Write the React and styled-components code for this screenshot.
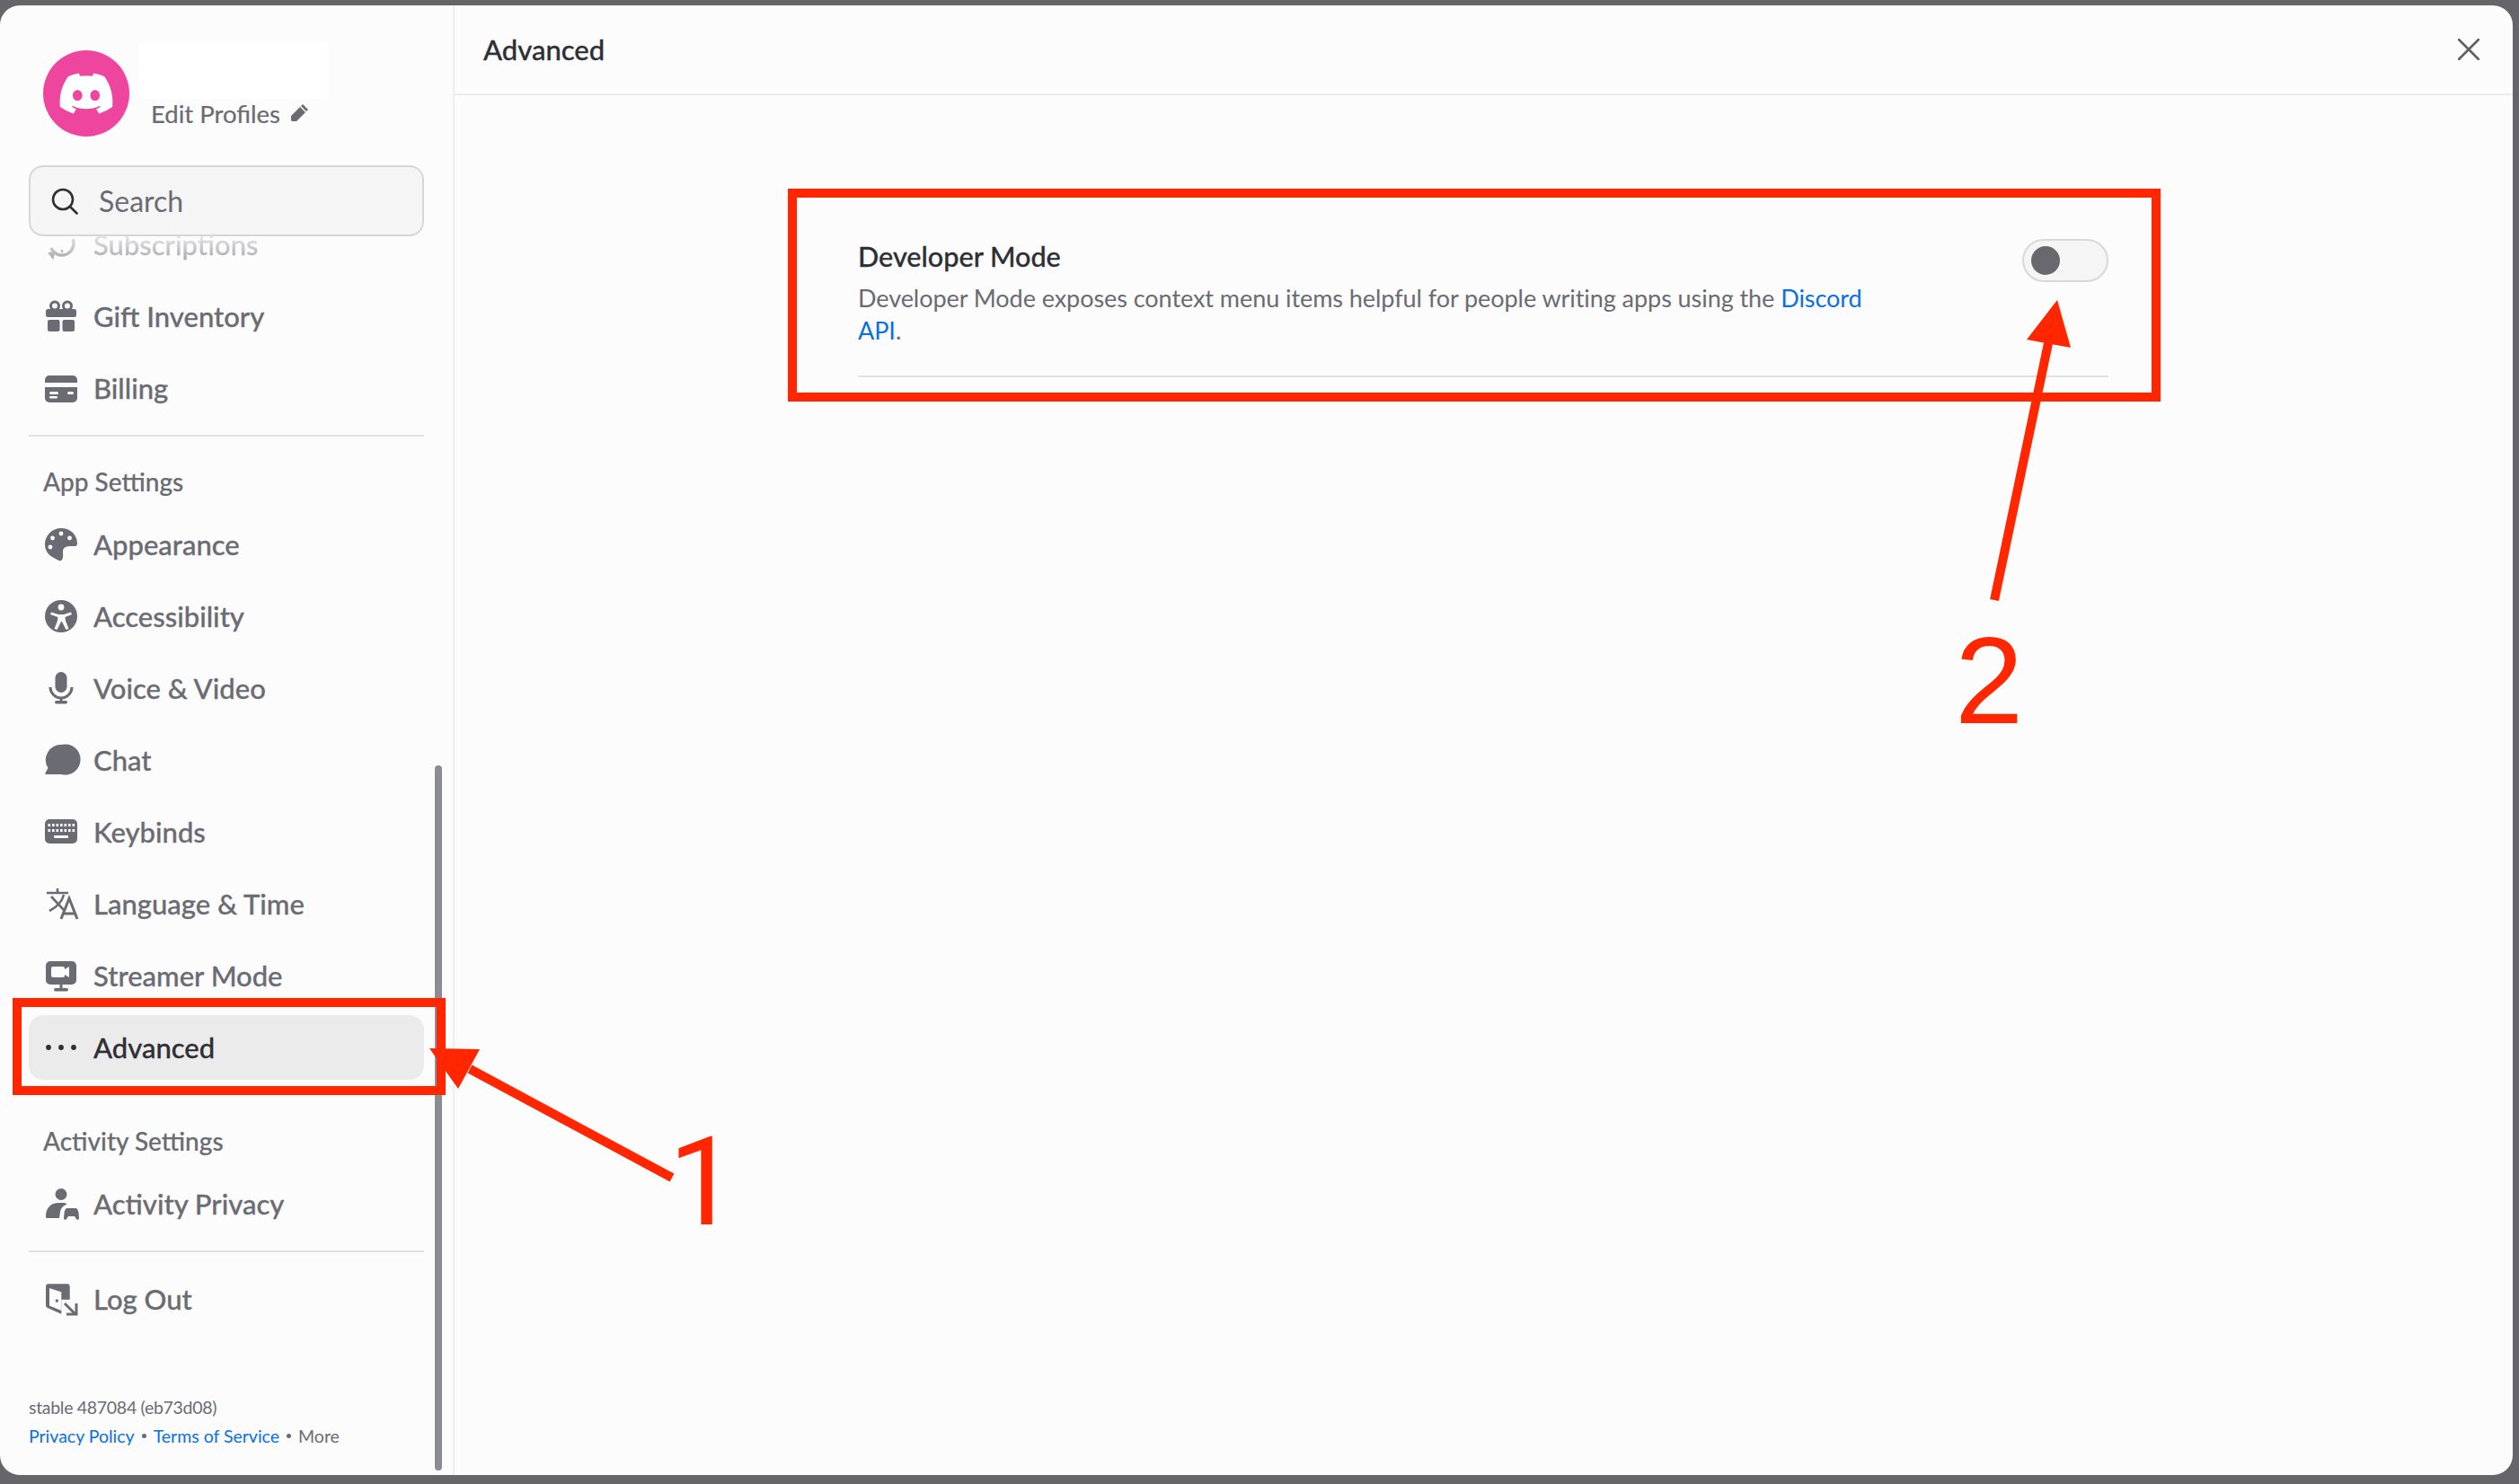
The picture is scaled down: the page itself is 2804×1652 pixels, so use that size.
import React from 'react';
import styled, { createGlobalStyle } from 'styled-components';
import { FaDiscord } from 'react-icons/fa';

const GlobalStyle = createGlobalStyle`
  html, body {
    margin: 0;
    background: #66666a;
  }
  * {
    box-sizing: border-box;
  }
`;

const FONT = `Lato, 'Noto Sans', 'Liberation Sans', sans-serif`;
const GREY = '#6a6b73';
const DARK = '#2e2f35';
const BG = '#fcfcfc';
const LINK = '#0b6fe3';
const RED = '#ff2600';

const Page = styled.div`
  position: relative;
  width: 2804px;
  height: 1652px;
  padding: 6px 7px 10px 0;
  font-family: ${FONT};
  overflow: hidden;
`;

const Win = styled.div`
  display: flex;
  height: 100%;
  background: ${BG};
  border-radius: 22px;
  overflow: hidden;
`;

const Sidebar = styled.aside`
  position: relative;
  display: flex;
  flex-direction: column;
  width: 506px;
  flex: none;
  border-right: 2px solid #eeeeef;
`;

const ScrollThumb = styled.div`
  position: absolute;
  left: 484px;
  top: 846px;
  bottom: 5px;
  width: 8px;
  border-radius: 4px;
  background: #8c8c94;
`;

const Profile = styled.div`
  display: flex;
  gap: 11px;
  height: 178px;
  padding: 42px 0 0 48px;
  flex: none;
`;

const Avatar = styled.div`
  display: flex;
  align-items: center;
  justify-content: center;
  width: 96px;
  height: 96px;
  margin-top: 8px;
  border-radius: 50%;
  background: #ee469f;
  color: #fff;
  font-size: 64px;
`;

const ProfileText = styled.div`
  display: flex;
  flex-direction: column;
`;

const NameMask = styled.div`
  width: 210px;
  height: 62px;
  background: #fff;
`;

const EditRow = styled.div`
  display: flex;
  align-items: center;
  gap: 11px;
  height: 32px;
  padding-left: 13px;
  color: ${GREY};
  font-size: 27.5px;
  -webkit-text-stroke: 0.2px ${GREY};
`;

const Search = styled.div`
  display: flex;
  align-items: center;
  flex: none;
  gap: 23px;
  width: 440px;
  height: 79px;
  margin-left: 32px;
  padding-left: 23px;
  border: 2px solid #d6d6d8;
  border-radius: 16px;
  background: #f5f5f5;
  color: ${GREY};
  font-size: 32px;
`;

const Nav = styled.nav`
  display: flex;
  flex-direction: column;
  flex: 1;
  padding: 0 32px 28px;
  overflow: hidden;
`;

const Group = styled.div`
  display: flex;
  flex-direction: column;
  flex: none;
  gap: 8px;
`;

const Row = styled.div`
  display: flex;
  align-items: center;
  flex: none;
  gap: 18px;
  height: 72px;
  padding-left: 18px;
  border-radius: 16px;
  background: ${(p) => (p.$active ? '#ebebeb' : 'transparent')};
  color: ${(p) => (p.$active ? DARK : GREY)};
  font-size: 31px;
  font-weight: 500;
  -webkit-text-stroke: 0.3px currentColor;
`;

const FadedRow = styled(Row)`
  margin-top: -27px;
  -webkit-mask-image: linear-gradient(to bottom, rgba(0,0,0,0.15) 27px, rgba(0,0,0,0.55) 72%);
  mask-image: linear-gradient(to bottom, rgba(0,0,0,0.15) 27px, rgba(0,0,0,0.55) 72%);
`;

const Icon = styled.svg`
  width: 36px;
  height: 36px;
  flex: none;
  overflow: visible;
  fill: currentColor;
`;

const Rule = styled.div`
  height: 2px;
  flex: none;
  margin: 16px 0;
  background: #e0e0e2;
`;

const Label = styled.div`
  display: flex;
  align-items: center;
  flex: none;
  height: 36px;
  margin: ${(p) => p.$top}px 0 16px 16px;
  color: ${GREY};
  font-size: 28px;
  font-weight: 500;
  -webkit-text-stroke: 0.2px ${GREY};
`;

const Footer = styled.div`
  display: flex;
  flex-direction: column;
  margin-top: auto;
  flex: none;
  color: ${GREY};
  font-size: 19.5px;
`;

const FootLine = styled.div`
  display: flex;
  align-items: center;
  height: 32px;
`;

const BuildLine = styled(FootLine)`
  letter-spacing: -0.3px;
`;

const FootLink = styled.span`
  color: ${LINK};
`;

const Dot = styled.span`
  width: 5px;
  height: 5px;
  margin: 0 8px;
  border-radius: 50%;
  background: ${GREY};
`;

const Main = styled.main`
  display: flex;
  flex-direction: column;
  flex: 1;
  min-width: 0;
`;

const TopBar = styled.header`
  display: flex;
  align-items: center;
  justify-content: space-between;
  height: 100px;
  padding: 0 37px 0 32px;
  border-bottom: 2px solid #ececed;
  color: ${DARK};
  font-size: 31px;
  font-weight: 500;
  -webkit-text-stroke: 0.3px ${DARK};
`;

const Close = styled.svg`
  width: 24px;
  height: 24px;
  stroke: #5f6066;
  stroke-width: 2.6;
  stroke-linecap: round;
`;

const Content = styled.div`
  padding: 160px 450px 0 449px;
`;

const Setting = styled.div`
  display: flex;
  align-items: flex-start;
  justify-content: space-between;
  height: 154px;
  border-bottom: 2px solid #e0e0e2;
`;

const SettingText = styled.div`
  display: flex;
  flex-direction: column;
  width: 1130px;
`;

const SettingTitle = styled.div`
  height: 40px;
  margin-bottom: 8px;
  color: ${DARK};
  font-size: 30.6px;
  font-weight: 500;
  line-height: 40px;
  -webkit-text-stroke: 0.3px ${DARK};
`;

const SettingDesc = styled.div`
  color: ${GREY};
  font-size: 27px;
  line-height: 36px;
  letter-spacing: -0.06px;
`;

const DescLink = styled.span`
  color: ${LINK};
`;

const Toggle = styled.div`
  display: flex;
  align-items: center;
  width: 96px;
  height: 48px;
  padding-left: 8px;
  border: 2px solid #d8d8da;
  border-radius: 24px;
  background: #f5f5f5;
`;

const Knob = styled.div`
  width: 32px;
  height: 32px;
  border-radius: 50%;
  background: #68686d;
`;

/* red annotations drawn on top of the screenshot */
const Overlay = styled.svg`
  position: absolute;
  left: 0;
  top: 0;
  width: 2804px;
  height: 1652px;
  pointer-events: none;
`;

const RedBox = styled.div`
  position: absolute;
  left: ${(p) => p.$x}px;
  top: ${(p) => p.$y}px;
  width: ${(p) => p.$w}px;
  height: ${(p) => p.$h}px;
  border: 10px solid ${RED};
  pointer-events: none;
`;

const Digit = styled.div`
  position: absolute;
  left: ${(p) => p.$x}px;
  top: ${(p) => p.$y}px;
  color: ${RED};
  font-family: ${(p) => p.$font}, sans-serif;
  font-size: 137px;
  line-height: 137px;
`;

const KEY_COLS = [3.5, 8, 12.500, 17, 21.500, 26, 30.500];

const icons = {
  subs: (
    <Icon viewBox="0 0 36 36">
      <path d="M7 22a13 13 0 1 0 24-10" fill="none" stroke="currentColor" strokeWidth="3.5" />
      <path d="M3 27l9-1-3 9z" />
      <path d="M19 3v3M19 24v3" stroke="currentColor" strokeWidth="2.5" />
    </Icon>
  ),
  gift: (
    <Icon viewBox="0 0 36 36">
      <circle cx="11" cy="6.5" r="4.5" fill="none" stroke="currentColor" strokeWidth="3" />
      <circle cx="25" cy="6.5" r="4.5" fill="none" stroke="currentColor" strokeWidth="3" />
      <rect x="1" y="10" width="34" height="9" rx="2.5" />
      <rect x="3" y="22" width="13.5" height="13" rx="2" />
      <rect x="19.5" y="22" width="13.5" height="13" rx="2" />
    </Icon>
  ),
  billing: (
    <Icon viewBox="0 0 36 36">
      <path d="M5 4h26a5 5 0 0 1 5 5v3H0V9a5 5 0 0 1 5-5z" />
      <path d="M0 17h36v12a5 5 0 0 1-5 5H5a5 5 0 0 1-5-5z" />
      <rect x="5" y="22" width="10" height="3" rx="1.5" fill={BG} />
      <rect x="5" y="27" width="9" height="2.5" rx="1.2" fill={BG} />
      <rect x="25" y="22" width="7" height="3" rx="1.5" fill={BG} />
    </Icon>
  ),
  palette: (
    <Icon viewBox="0 0 36 36">
      <path d="M18 0C28 0 36 7 36 17C36 21 33 20 29 20C24 20 20 21 20 26C20 30 21 34 18 36C16 37 14 35 10 33C4 30 0 25 0 18C0 8 8 0 18 0Z" />
      <circle cx="18" cy="6" r="2.4" fill={BG} />
      <circle cx="8.5" cy="11" r="2.4" fill={BG} />
      <circle cx="27.5" cy="11" r="2.4" fill={BG} />
      <circle cx="6" cy="21" r="2.4" fill={BG} />
    </Icon>
  ),
  access: (
    <Icon viewBox="0 0 36 36">
      <circle cx="18" cy="18" r="18" />
      <circle cx="18" cy="8" r="3.4" fill={BG} />
      <path d="M7 13.5l8 2.5h6l8-2.5 1 2.5-7.5 3 .5 4 3.5 9-3 1-4.5-9h-1l-4.5 9-3-1 3.5-9 .5-4L6 16z" fill={BG} />
    </Icon>
  ),
  mic: (
    <Icon viewBox="0 0 36 36">
      <rect x="11.5" y="0" width="13" height="23" rx="6.5" />
      <path d="M6 17a12 12 0 0 0 24 0" fill="none" stroke="currentColor" strokeWidth="3" />
      <rect x="16.5" y="28" width="3" height="6" />
      <rect x="11" y="32" width="14" height="3.5" rx="1.7" />
    </Icon>
  ),
  chat: (
    <Icon viewBox="0 0 36 36">
      <path d="M18.500 1a17 17 0 1 1 0 33H1.500c-1 0-1.500-1-1-1.800L3.500 27A17 17 0 0 1 18.500 1z" />
    </Icon>
  ),
  keys: (
    <Icon viewBox="0 0 36 36">
      <rect x="0" y="4" width="36" height="27" rx="5" />
      {KEY_COLS.map((x) => (
        <rect key={x} x={x} y="9" width="2.6" height="3" fill={BG} />
      ))}
      {KEY_COLS.map((x) => (
        <rect key={x} x={x} y="15" width="2.6" height="3" fill={BG} />
      ))}
      <rect x="10" y="22" width="16" height="3" rx="1" fill={BG} />
    </Icon>
  ),
  lang: (
    <Icon viewBox="0 0 36 36">
      <path d="M2 6h24M14 1v5M7 10l14 15M21 8C19 16 13 22 5 26" fill="none" stroke="currentColor" strokeWidth="2.6" />
      <path d="M18 35l9-23 9 23M21 29h12" fill="none" stroke="currentColor" strokeWidth="3" />
    </Icon>
  ),
  stream: (
    <Icon viewBox="0 0 36 36">
      <rect x="1" y="2" width="34" height="26" rx="5" />
      <path d="M9 8h11a2 2 0 0 1 2 2v1l5-3v12l-5-3v1a2 2 0 0 1-2 2H9a2 2 0 0 1-2-2V10a2 2 0 0 1 2-2z" fill={BG} />
      <rect x="16.500" y="28" width="3" height="4" />
      <rect x="10" y="32" width="16" height="3.5" rx="1.7" />
    </Icon>
  ),
  dots: (
    <Icon viewBox="0 0 36 36">
      <circle cx="4" cy="18" r="2.9" />
      <circle cx="18" cy="18" r="2.9" />
      <circle cx="32" cy="18" r="2.9" />
    </Icon>
  ),
  activity: (
    <Icon viewBox="0 0 36 36">
      <circle cx="18" cy="7.500" r="6.500" />
      <path d="M1 32c0-9 5-15 15-15h6c1 0 2 1 2 2-4 1-6 4-7 8l-1 7H2.500A1.500 1.500 0 0 1 1 32z" />
      <path d="M25 23h9c2 0 3 2 3.500 5l.5 6c0 2-2 2.500-3 1l-2-3h-7l-2 3c-1 1.500-3 1-3-1l.5-6c.5-3 1.500-5 3.500-5z" />
    </Icon>
  ),
  logout: (
    <Icon viewBox="0 0 36 36">
      <path d="M4 1.300H24.700a3 3 0 0 1 3 3V18.700H18.300V34.700L3 28a3 3 0 0 1-2-3V4.300a3 3 0 0 1 3-3z" />
      <path d="M5 6L18.300 10.300V31L5 25.500Z" fill={BG} />
      <circle cx="13.300" cy="20" r="1.700" />
      <path d="M22 23l12 12M35 23v12H24" fill="none" stroke="currentColor" strokeWidth="3" />
    </Icon>
  ),
};

const Item = ({ icon, children, active }) => (
  <Row $active={active}>
    {icons[icon]}
    {children}
  </Row>
);

const App = () => {
  return (
    <Page>
      <GlobalStyle />
      <Win>
        <Sidebar>
          <Profile>
            <Avatar>
              <FaDiscord />
            </Avatar>
            <ProfileText>
              <NameMask />
              <EditRow>
                Edit Profiles
                <svg width="20" height="20" viewBox="0 0 20 20" fill={GREY}>
                  <path d="M14 0l6 6-2 2-6-6zM11 3l6 6-10 10H2l-1-1v-5z" />
                </svg>
              </EditRow>
            </ProfileText>
          </Profile>
          <Search>
            <svg width="30" height="30" viewBox="0 0 30 30" fill="none" stroke={DARK} strokeWidth="2.6" strokeLinecap="round">
              <circle cx="13" cy="13" r="11" />
              <path d="M21 21l7.500 7.500" />
            </svg>
            Search
          </Search>
          <Nav>
            <Group>
              <FadedRow>
                {icons.subs}
                Subscriptions
              </FadedRow>
              <Item icon="gift">Gift Inventory</Item>
              <Item icon="billing">Billing</Item>
            </Group>
            <Rule />
            <Label $top={16}>App Settings</Label>
            <Group>
              <Item icon="palette">Appearance</Item>
              <Item icon="access">Accessibility</Item>
              <Item icon="mic">Voice &amp; Video</Item>
              <Item icon="chat">Chat</Item>
              <Item icon="keys">Keybinds</Item>
              <Item icon="lang">Language &amp; Time</Item>
              <Item icon="stream">Streamer Mode</Item>
              <Item icon="dots" active>Advanced</Item>
            </Group>
            <Label $top={50}>Activity Settings</Label>
            <Group>
              <Item icon="activity">Activity Privacy</Item>
            </Group>
            <Rule />
            <Group>
              <Item icon="logout">Log Out</Item>
            </Group>
            <Footer>
              <BuildLine>stable 487084 (eb73d08)</BuildLine>
              <FootLine>
                <FootLink>Privacy Policy</FootLink>
                <Dot />
                <FootLink>Terms of Service</FootLink>
                <Dot />
                More
              </FootLine>
            </Footer>
          </Nav>
          <ScrollThumb />
        </Sidebar>
        <Main>
          <TopBar>
            Advanced
            <Close viewBox="0 0 24 24">
              <path d="M1 1l22 22M23 1L1 23" />
            </Close>
          </TopBar>
          <Content>
            <Setting>
              <SettingText>
                <SettingTitle>Developer Mode</SettingTitle>
                <SettingDesc>
                  Developer Mode exposes context menu items helpful for people writing apps using the <DescLink>Discord API</DescLink>.
                </SettingDesc>
              </SettingText>
              <Toggle>
                <Knob />
              </Toggle>
            </Setting>
          </Content>
        </Main>
      </Win>

      <RedBox $x={14} $y={1111} $w={482} $h={108} />
      <RedBox $x={877} $y={210} $w={1528} $h={237} />
      <Overlay viewBox="0 0 2804 1652">
        <path d="M748 1311L523 1190" stroke={RED} strokeWidth="10" />
        <path d="M478 1167L534 1168L510 1212Z" fill={RED} />
        <path d="M2220 668L2280 382" stroke={RED} strokeWidth="10" />
        <path d="M2290 334L2256 378L2305 387Z" fill={RED} />
      </Overlay>
      <Digit $x={744} $y={1248} $font="Roboto">1</Digit>
      <Digit $x={2176} $y={689} $font="'Liberation Sans'">2</Digit>
    </Page>
  );
};

export default App;
